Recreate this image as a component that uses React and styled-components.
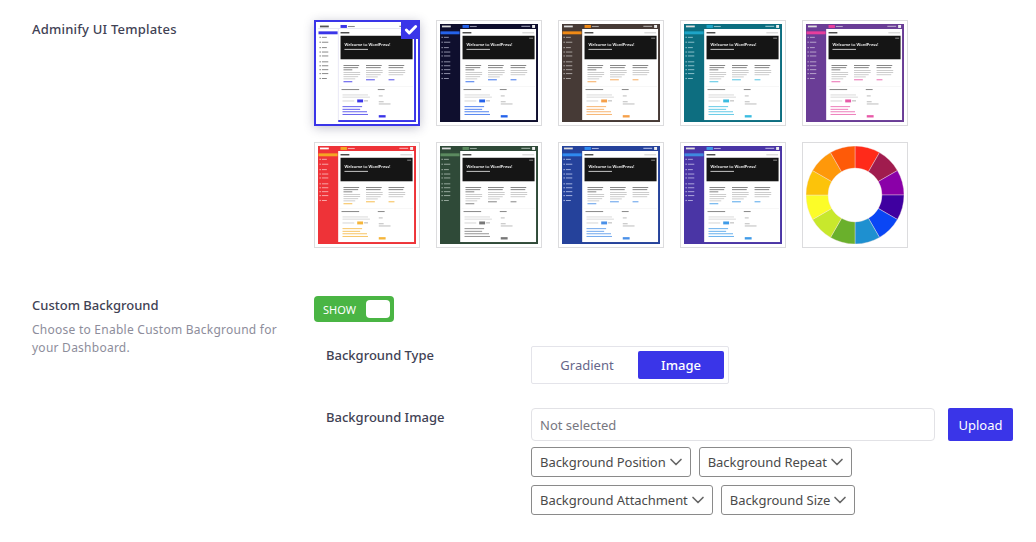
import React from 'react'
import styled, { createGlobalStyle } from 'styled-components'
import { ChevronDown, Check } from 'lucide-react'

const GlobalStyle = createGlobalStyle`
  html, body {
    margin: 0;
    background: #fff;
  }
  body {
    font-family: "Noto Sans", "Open Sans", sans-serif;
    color: #444;
  }
  * {
    box-sizing: border-box;
  }
`

const Page = styled.div`
  width: 1036px;
  height: 542px;
  overflow: hidden;
  padding: 20px 23px 0 32px;
`

const Row = styled.section`
  display: grid;
  grid-template-columns: 282px 1fr;
  margin-bottom: ${p => p.$gap || 0}px;
`

const Title = styled.h3`
  margin: 0;
  font-size: 13px;
  line-height: 18px;
  font-weight: 500;
  color: #3f4254;
  letter-spacing: ${p => p.$spread || 0}px;
`

const Subtitle = styled.p`
  margin: 7px 0 0;
  width: 250px;
  font-size: 12px;
  line-height: 18px;
  letter-spacing: 0.25px;
  color: #8d8d9b;
`

const ThumbGrid = styled.div`
  display: grid;
  grid-template-columns: repeat(5, 106px);
  grid-auto-rows: 106px;
  gap: 16px;
`

const Thumb = styled.div`
  position: relative;
  padding: 3px;
  border: 1px solid #dcdcde;
  background: #fff;

  ${p => p.$active && `
    padding: 2px;
    border: 2px solid #3a35e8;
    box-shadow: 0 2px 10px rgba(40, 40, 80, 0.28);
  `}
`

const ThumbArt = styled.svg`
  display: block;
  width: 100%;
  height: 100%;
  filter: blur(${p => p.$blur}px);
`

const CheckBadge = styled.span`
  position: absolute;
  top: -2px;
  right: -2px;
  width: 19px;
  height: 19px;
  display: flex;
  align-items: center;
  justify-content: center;
  background: #3a35e8;
  color: #fff;

  svg {
    width: 14px;
    height: 14px;
  }
`

const Toggle = styled.div`
  display: flex;
  align-items: center;
  justify-content: space-between;
  width: 80px;
  height: 26px;
  padding: 0 4px 0 9px;
  border-radius: 4px;
  background: #4ab544;
  color: #fff;
  font-size: 11px;
`

const ToggleKnob = styled.span`
  width: 24px;
  height: 18px;
  border-radius: 4px;
  background: #fff;
`

const Field = styled.div`
  display: grid;
  grid-template-columns: 205px 1fr;
  padding-left: 12px;
  margin-top: ${p => p.$top}px;
`

const Tabs = styled.div`
  display: flex;
  width: 198px;
  height: 38px;
  padding: 4px;
  border: 1px solid #e4e4ea;
  border-radius: 2px;
`

const Tab = styled.div`
  flex: ${p => (p.$active ? '0 0 86px' : '1')};
  display: flex;
  align-items: center;
  justify-content: center;
  border-radius: 2px;
  font-size: 13px;
  font-weight: ${p => (p.$active ? 500 : 400)};
  color: ${p => (p.$active ? '#fff' : '#66668a')};
  background: ${p => (p.$active ? '#3a35e8' : 'transparent')};
`

const UploadRow = styled.div`
  display: flex;
  gap: 13px;
`

const TextBox = styled.div`
  width: 404px;
  height: 33px;
  display: flex;
  align-items: center;
  padding: 0 8px;
  border: 1px solid #e2e2e6;
  border-radius: 4px;
  font-size: 13px;
  color: #77777f;
`

const UploadButton = styled.button`
  width: 65px;
  height: 33px;
  padding: 0;
  border: 0;
  border-radius: 2px;
  background: #3a35e8;
  color: #fff;
  font: 13px "Noto Sans", sans-serif;
`

const SelectStack = styled.div`
  display: flex;
  flex-direction: column;
  gap: 8px;
  margin-top: 6px;
`

const SelectRow = styled.div`
  display: flex;
  gap: 8px;
`

const SelectBox = styled.div`
  display: flex;
  align-items: center;
  height: 30px;
  padding: 0 4px 0 8px;
  border: 1px solid #8a8a8a;
  border-radius: 3px;
  font-size: 13px;
  letter-spacing: -0.05px;
  color: #4a4a4a;

  svg {
    width: 20px;
    height: 20px;
    color: #666;
  }
`

const themes = [
  { active: '#3a35e8', side: '#ffffff', tag: '#3a35e8', accent: '#3a35e8', item: '#888', logo: '#555', frame: '#3a35e8' },
  { active: '#2563eb', side: '#0f0f2e', tag: '#2563eb', accent: '#2563eb', item: '#8f90a8', logo: '#ddd', frame: '#0f0f2e' },
  { active: '#f08a16', side: '#463a36', tag: '#f08a16', accent: '#f5a04a', item: '#a8a29f', logo: '#ddd', frame: '#463a36' },
  { active: '#1ea5c7', side: '#0d6e80', tag: '#1ea5c7', accent: '#3bbce0', item: '#8cc0ca', logo: '#ddd', frame: '#0d6e80' },
  { active: '#e83e9c', side: '#6a3d96', tag: '#e83e9c', accent: '#e85aa8', item: '#b8a4cc', logo: '#ddd', frame: '#6a3d96' },
  { active: '#f5a623', side: '#ee3338', tag: '#f5a623', accent: '#f5b53a', item: '#f8a8a8', logo: '#fff', frame: '#ee3338' },
  { active: '#5b8a5f', side: '#2f4a38', tag: '#5b8a5f', accent: '#777', item: '#98aa9e', logo: '#ddd', frame: '#2f4a38' },
  { active: '#2f8af0', side: '#25429b', tag: '#2f8af0', accent: '#4a90e8', item: '#a4b2e0', logo: '#ddd', frame: '#25429b' },
  { active: '#3f8ae0', side: '#4a35a5', tag: '#3f9be8', accent: '#3f9be8', item: '#aea6dc', logo: '#ddd', frame: '#4a35a5' },
]

const menuRows = [13, 18, 23.5, 28, 32, 38, 42, 46, 50, 55]

// bars of body copy inside the mini dashboard
const Lines = ({ x, y, widths, color = '#9a9a9a', h = 0.8, step = 2.2 }) => (
  <g fill={color}>
    {widths.map((w, i) => (
      <rect key={i} x={x} y={y + i * step} width={w} height={h} />
    ))}
  </g>
)

const MiniDashboard = ({ t }) => (
  <ThumbArt viewBox="0 0 100 100" preserveAspectRatio="none" $blur={0.4}>
    <rect width="100" height="100" fill={t.frame} />
    <rect x="20.5" y="5" width="77.5" height="93" fill="#fff" />
    <rect width="100" height="5" fill={t.side} />
    <rect x="0" y="5" width="20.5" height="95" fill={t.side} />
    {t.side === '#ffffff' && <rect x="20.3" y="5" width="0.3" height="95" fill="#ddd" />}
    {t.side === '#ffffff' && <rect y="4.8" width="100" height="0.3" fill="#ddd" />}

    <rect x="2" y="1.6" width="9" height="1.8" fill={t.logo} />
    <rect x="23" y="1" width="6.5" height="3" fill={t.tag} />
    <rect x="30.5" y="2" width="7" height="1.1" fill={t.item} />
    <rect x="83" y="1.8" width="9" height="1.2" fill={t.item} />
    <rect x="94" y="1" width="3" height="3" fill="#eee" />

    <rect x="0.5" y="7.5" width="19.5" height="3" fill={t.active} />
    {menuRows.map(y => (
      <g key={y} fill={t.item}>
        <rect x="1.5" y={y} width="1.4" height="1.2" />
        <rect x="4" y={y + 0.1} width={y % 2 ? 5 : 6.5} height="1" />
      </g>
    ))}

    <rect x="23" y="8.3" width="9" height="1.3" fill="#333" />
    <rect x="84" y="8.5" width="12" height="1" fill="#ccc" />
    <rect x="23" y="12" width="73.5" height="24" fill="#151515" />
    <text x="27" y="22" fontFamily="Noto Sans, sans-serif" fontSize="4.1" fontWeight="600" fill="#f2f2f2">Welcome to WordPress!</text>
    <rect x="27" y="25.4" width="24" height="1" fill="#c8c8c8" />
    <rect x="91" y="14" width="4" height="0.9" fill="#999" />

    <Lines x={26} y={42} widths={[16, 15, 9]} color="#666" step={2.2} />
    <Lines x={26} y={49} widths={[17, 17, 15, 12]} color="#c0c0c0" />
    <rect x="26" y="58.5" width="9" height="0.9" fill={t.accent} />
    <Lines x={49} y={42} widths={[16, 15]} color="#666" step={2.2} />
    <Lines x={49} y={47} widths={[17, 17, 15, 12]} color="#c0c0c0" />
    <rect x="49" y="56.5" width="9" height="0.9" fill={t.accent} />
    <Lines x={72} y={42} widths={[16, 15]} color="#666" step={2.2} />
    <Lines x={72} y={47} widths={[17, 17, 15]} color="#c0c0c0" />
    <rect x="72" y="56.5" width="6" height="0.9" fill={t.accent} />

    <rect x="22" y="64" width="75" height="0.3" fill="#e2e2e2" />
    <rect x="24" y="66.5" width="18" height="0.9" fill="#777" />
    <rect x="61" y="66.5" width="7" height="0.9" fill="#777" />
    <Lines x={25} y={72} widths={[26, 28]} color="#d0d0d0" />
    <rect x="25" y="78" width="12" height="1.1" fill="#d8d8d8" />
    <rect x="40" y="77" width="6" height="3" fill={t.accent} />
    <rect x="47" y="78" width="4" height="0.9" fill="#aaa" />
    <Lines x={25} y={84} widths={[20, 18, 25, 26]} color={t.accent} step={2.6} />
    <Lines x={62} y={73} widths={[4]} color="#aaa" />
    <Lines x={62} y={79} widths={[5, 12]} color="#aaa" />
    <rect x="62" y="93" width="7" height="2.4" fill={t.accent} />
  </ThumbArt>
)

const wheel = ['#ff2a1a', '#a01c4e', '#8a00a8', '#3f00a0', '#0a46f5', '#1e90d0', '#6ab02c', '#c8e82c', '#fcfc28', '#fcc30a', '#fe980a', '#fe5a08']

// 12 equal ring segments, clockwise from 12 o'clock
const segment = i => {
  const r1 = 50
  const r2 = 27.5
  const pt = (r, a) => `${(50 + r * Math.sin(a)).toFixed(2)} ${(50 - r * Math.cos(a)).toFixed(2)}`
  const a = (i * Math.PI) / 6
  const b = ((i + 1) * Math.PI) / 6
  return `M${pt(r1, a)}A${r1} ${r1} 0 0 1 ${pt(r1, b)}L${pt(r2, b)}A${r2} ${r2} 0 0 0 ${pt(r2, a)}Z`
}

const ColorWheel = () => (
  <ThumbArt viewBox="0 0 100 100" $blur={0}>
    {wheel.map((c, i) => (
      <path key={c} d={segment(i)} fill={c} stroke="#f4e2e2" strokeWidth="0.4" />
    ))}
  </ThumbArt>
)

const selects = [
  ['Background Position', 'Background Repeat'],
  ['Background Attachment', 'Background Size'],
]

export default function App() {
  return (
    <Page>
      <GlobalStyle />
      <Row $gap={48}>
        <Title $spread={0.2}>Adminify UI Templates</Title>
        <ThumbGrid>
          {themes.map((t, i) => (
            <Thumb key={i} $active={i === 0}>
              <MiniDashboard t={t} />
              {i === 0 && (
                <CheckBadge>
                  <Check strokeWidth={5} />
                </CheckBadge>
              )}
            </Thumb>
          ))}
          <Thumb>
            <ColorWheel />
          </Thumb>
        </ThumbGrid>
      </Row>
      <Row>
        <div>
          <Title>Custom Background</Title>
          <Subtitle>Choose to Enable Custom Background for your Dashboard.</Subtitle>
        </div>
        <div>
          <Toggle>
            SHOW
            <ToggleKnob />
          </Toggle>
          <Field $top={24}>
            <Title>Background Type</Title>
            <Tabs>
              <Tab>Gradient</Tab>
              <Tab $active>Image</Tab>
            </Tabs>
          </Field>
          <Field $top={24}>
            <Title>Background Image</Title>
            <div>
              <UploadRow>
                <TextBox>Not selected</TextBox>
                <UploadButton>Upload</UploadButton>
              </UploadRow>
              <SelectStack>
                {selects.map(row => (
                  <SelectRow key={row[0]}>
                    {row.map(label => (
                      <SelectBox key={label}>
                        {label}
                        <ChevronDown />
                      </SelectBox>
                    ))}
                  </SelectRow>
                ))}
              </SelectStack>
            </div>
          </Field>
        </div>
      </Row>
    </Page>
  )
}
